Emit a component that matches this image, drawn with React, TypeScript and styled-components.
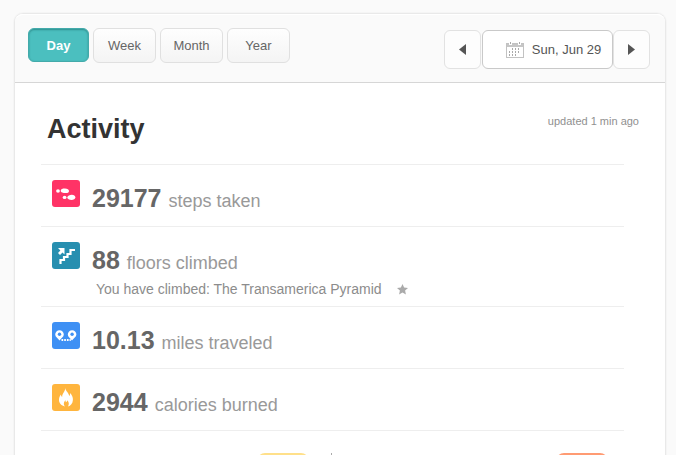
import React from 'react';
import styled, { createGlobalStyle } from 'styled-components';

const GlobalStyle = createGlobalStyle`
  * { box-sizing: border-box; }
  body {
    margin: 0;
    background: #fafafa;
    font-family: "Liberation Sans", Arial, sans-serif;
    color: #666;
  }
`;

const Page = styled.main`
  display: flex;
  height: 100vh;
  overflow: hidden;
  padding: 13px 10px 0 14px;
`;

const Card = styled.section`
  flex: 1;
  display: flex;
  flex-direction: column;
  height: max-content;
  min-height: 100%;
  background: #fff;
  border: 1px solid #e9e9e9;
  border-bottom: 0;
  border-radius: 9px 9px 0 0;
  box-shadow: 0 0 0 1px #f5f5f5;
`;

const Toolbar = styled.header`
  display: flex;
  justify-content: space-between;
  align-items: flex-start;
  height: 69px;
  padding: 14px 15px 0 13px;
  background: #fafafa;
  border-bottom: 1px solid #d6d6d6;
  border-radius: 8px 8px 0 0;
  box-shadow: inset 0 2px 0 -1px #fff;
`;

const Tabs = styled.nav`
  display: flex;
  gap: 4px;
`;

const Tab = styled.button<{ $active?: boolean }>`
  width: ${p => (p.$active ? 61 : 63)}px;
  height: ${p => (p.$active ? 34 : 35)}px;
  padding: 0;
  font: ${p => (p.$active ? 'bold' : 'normal')} 13px "Liberation Sans", Arial, sans-serif;
  color: ${p => (p.$active ? '#fff' : '#666')};
  background: ${p => (p.$active ? '#4bbfbf' : 'linear-gradient(#fefefe, #f4f4f4)')};
  border: 1px solid ${p => (p.$active ? '#43aaaa' : '#e0e0e0')};
  border-radius: 6px;
  box-shadow: ${p => (p.$active ? 'inset 0 1px 2px #2f8d8d' : 'none')};
`;

const DatePicker = styled.div`
  display: flex;
  padding-top: 2px;
`;

const Arrow = styled.button`
  display: grid;
  place-items: center;
  width: 37px;
  height: 39px;
  padding: 0;
  color: #555;
  background: #fdfdfd;
  border: 1px solid #e2e2e2;
  border-radius: 6px;
`;

const DateButton = styled.button`
  display: flex;
  align-items: center;
  justify-content: center;
  gap: 8px;
  width: 131px;
  height: 39px;
  margin-left: 1px;
  padding: 0 0 0 12px;
  font: 13px "Liberation Sans", Arial, sans-serif;
  color: #555;
  white-space: nowrap;
  background: #fff;
  border: 1px solid #c9c9c9;
  border-radius: 6px;
`;

const TitleBar = styled.div`
  display: flex;
  justify-content: space-between;
  align-items: flex-start;
  height: 81px;
  padding: 31px 26px 0 32px;
`;

const Title = styled.h1`
  margin: 0;
  font-size: 27px;
  line-height: 30px;
  color: #333;
`;

const Updated = styled.span`
  font-size: 11px;
  line-height: 14px;
  color: #909090;
`;

const Stats = styled.ul`
  margin: 0 41px 0 26px;
  padding: 0;
  list-style: none;
  border-bottom: 1px solid #eee;
`;

const Stat = styled.li`
  display: flex;
  align-items: flex-start;
  gap: 12px;
  min-height: 62px;
  padding: 15px 0 0 11px;
  border-top: 1px solid #eee;
`;

const IconTile = styled.span<{ $color: string }>`
  display: block;
  width: 28px;
  height: 27px;
  border-radius: 3px;
  background: ${p => p.$color};
  svg { display: block; }
`;

const Reading = styled.div`
  padding-top: 2px;
`;

const Line = styled.div`
  display: flex;
  align-items: baseline;
  gap: 7px;
  height: 32px;
  line-height: 32px;
`;

const Value = styled.strong`
  font-size: 25px;
  color: #666;
`;

const Unit = styled.span`
  font-size: 18px;
  color: #999;
`;

const Note = styled.div`
  display: flex;
  align-items: center;
  gap: 15px;
  height: 30px;
  padding: 0 0 4px 4px;
  font-size: 14px;
  color: #8c8c8c;
`;

const Gauges = styled.div`
  display: flex;
  justify-content: space-between;
  align-items: flex-start;
  padding: 22px 57px 0 242px;
`;

const Gauge = styled.span<{ $color: string }>`
  width: 52px;
  height: 12px;
  border-radius: 8px 8px 0 0;
  background: ${p => p.$color};
`;

const Divider = styled.span`
  width: 1px;
  height: 12px;
  margin-right: 203px;
  background: #aaa;
`;

const Triangle = ({ d }: { d: string }) => (
  <svg width="7" height="11" viewBox="0 0 7 11" aria-hidden="true"><path d={d} fill="currentColor" /></svg>
);

const CalendarIcon = () => (
  <svg width="18" height="16" viewBox="0 0 18 16" aria-hidden="true">
    <rect x=".5" y="1.5" width="17" height="14" fill="#fff" stroke="#c2c2c2" />
    <path d="M1 2h16v3H1z" fill="#c6c6c6" />
    <path d="M3 0h3v3H3zM12 0h3v3h-3z" fill="#fff" />
    <path d="M4 0h1v2H4zM13 0h1v2h-1z" fill="#aaa" />
    <path d="M6 6h1v2H6zm3 0h1v2H9zm3 0h1v2h-1zM3 9h1v2H3zm3 0h1v2H6zm3 0h1v2H9zm3 0h1v2h-1zM3 12h1v2H3zm3 0h1v2H6zm3 0h1v2H9z" fill="#aaa" />
  </svg>
);

const StepsIcon = () => (
  <svg width="28" height="27" viewBox="0 0 28 27" fill="#fff" aria-hidden="true">
    <ellipse cx="6" cy="11" rx="1.9" ry="1.7" />
    <path d="M8.700 10.400C9 8.700 11.200 8.400 13 8.500c2.300.1 4 1 4 2.500 0 1.700-1.800 2.200-3.600 2.100-2-.1-4.900-.8-4.700-2.700z" />
    <ellipse cx="12.600" cy="17.400" rx="1.900" ry="1.700" />
    <path d="M15.300 17.600c.2-1.900 2.600-2.800 4.500-2.800 2.100 0 3.500 1 3.500 2.500 0 1.800-1.700 2.700-3.800 2.700-2 0-4.300-.7-4.200-2.400z" />
  </svg>
);

const FloorsIcon = () => (
  <svg width="28" height="27" viewBox="0 0 28 27" aria-hidden="true">
    <path d="M8.500 22v-4H12v-3h3.500v-3H18.500V8H23" fill="none" stroke="#fff" strokeWidth="2.200" />
    <path d="M6 6h6.500v6.500l-2-2L8 13l-2-2 2.400-2.600z" fill="#fff" />
  </svg>
);

const MilesIcon = () => (
  <svg width="28" height="27" viewBox="0 0 28 27" aria-hidden="true">
    <path d="M7.500 18.500C6 16.500 3.200 15 3.200 12.600a4.300 4.300 0 0 1 8.600 0c0 2.400-2.800 3.900-4.300 5.900zM20 18.500c-1.500-2-4.200-3.500-4.200-5.900a4.300 4.300 0 0 1 8.600 0c0 2.400-2.900 3.900-4.400 5.900z" fill="#fff" />
    <circle cx="7.500" cy="12.300" r="1.700" fill="#3e90f4" />
    <circle cx="20.100" cy="12.300" r="1.700" fill="#3e90f4" />
    <path d="M9.500 18h1.700m1 0h1.700m1 0h1.700m1 0h1.200" stroke="#fff" strokeWidth="1.800" />
  </svg>
);

const CaloriesIcon = () => (
  <svg width="28" height="27" viewBox="0 0 28 27" aria-hidden="true">
    <path d="M13.400 4c.2 3.500 3.600 4.800 3.800 8 .8-.6 1-1.700.9-3 1.800 1.700 3 4.400 2.800 7-.2 3.500-2.200 5.800-5 6.500 1.400-2 1.200-4.400-.6-6.300-.2 1-.6 1.600-1.400 2-.3-.7-.4-1.300-.3-2-1.700 1.300-2.500 4-.7 6.200-3.300-.6-5.900-3-5.900-6.400 0-2.300.7-4 1.900-5.500.1 1.200.5 2 1.300 2.600C9.900 9.500 13 8 13.400 4z" fill="#fff" />
  </svg>
);

const StarIcon = () => (
  <svg width="11" height="11" viewBox="0 0 11 11" aria-hidden="true">
    <path d="M5.500 0l1.600 3.600 3.900.4-2.900 2.600.8 3.900-3.400-2-3.400 2 .8-3.900L0 4l3.900-.4z" fill="#aaa" />
  </svg>
);

const stats = [
  { value: '29177', unit: 'steps taken', color: '#ff3366', icon: <StepsIcon /> },
  { value: '88', unit: 'floors climbed', color: '#278fb0', icon: <FloorsIcon />, note: 'You have climbed: The Transamerica Pyramid' },
  { value: '10.13', unit: 'miles traveled', color: '#3e90f4', icon: <MilesIcon /> },
  { value: '2944', unit: 'calories burned', color: '#ffb53e', icon: <CaloriesIcon /> },
];

export default function App() {
  return (
    <>
      <GlobalStyle />
      <Page>
        <Card>
          <Toolbar>
            <Tabs aria-label="Period">
              {['Day', 'Week', 'Month', 'Year'].map(name => (
                <Tab key={name} type="button" $active={name === 'Day'} aria-pressed={name === 'Day'}>{name}</Tab>
              ))}
            </Tabs>
            <DatePicker>
              <Arrow type="button" aria-label="Previous day"><Triangle d="M7 0v11L0 5.500z" /></Arrow>
              <DateButton type="button"><CalendarIcon />Sun, Jun 29</DateButton>
              <Arrow type="button" aria-label="Next day"><Triangle d="M0 0v11l7-5.500z" /></Arrow>
            </DatePicker>
          </Toolbar>
          <TitleBar>
            <Title>Activity</Title>
            <Updated>updated 1 min ago</Updated>
          </TitleBar>
          <Stats>
            {stats.map(s => (
              <Stat key={s.unit}>
                <IconTile $color={s.color}>{s.icon}</IconTile>
                <Reading>
                  <Line><Value>{s.value}</Value><Unit>{s.unit}</Unit></Line>
                  {s.note && <Note>{s.note}<StarIcon /></Note>}
                </Reading>
              </Stat>
            ))}
          </Stats>
          <Gauges>
            <Gauge $color="#ffe08a" />
            <Divider />
            <Gauge $color="#ff9b73" />
          </Gauges>
        </Card>
      </Page>
    </>
  );
}
